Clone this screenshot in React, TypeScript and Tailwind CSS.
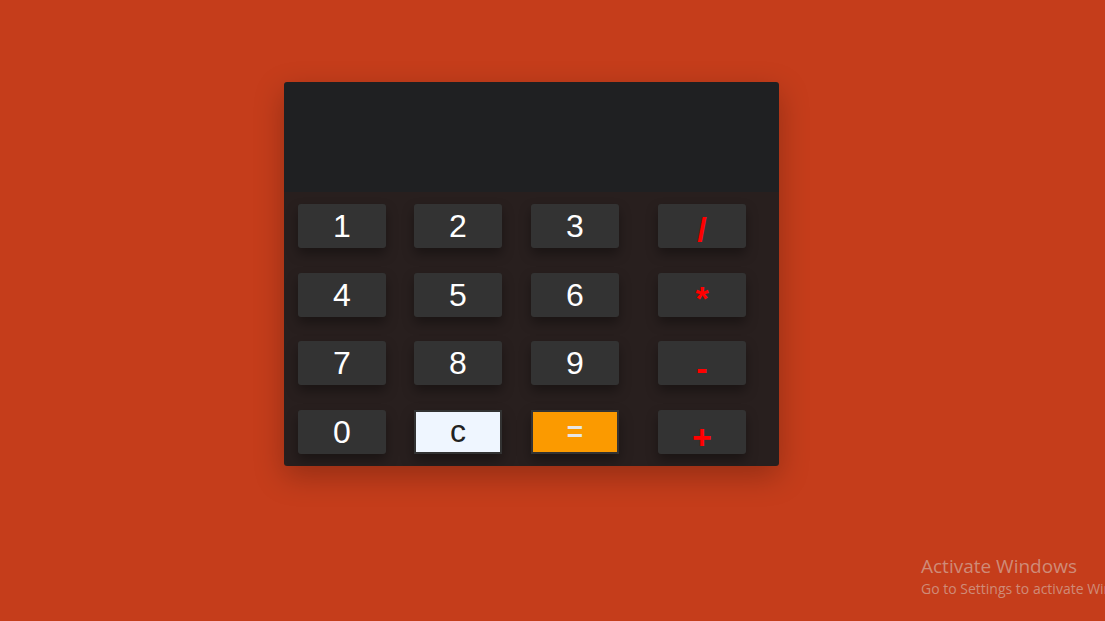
const keys = [
  ['1', '2', '3', '/'],
  ['4', '5', '6', '*'],
  ['7', '8', '9', '-'],
  ['0', 'c', '=', '+'],
];

const Key = ({ label, col }: { label: string; col: number }) => {
  if (label === 'c') {
    return (
      <div className="h-[44px] w-[88px] flex items-center justify-center bg-[#eff6ff] border-2 border-[#333333] text-[#222222] text-[32px] leading-none shadow-[0_6px_12px_rgba(0,0,0,0.35)]">
        <span className="-mt-[2px]">c</span>
      </div>
    );
  }
  if (label === '=') {
    return (
      <div className="h-[44px] w-[88px] flex items-center justify-center bg-[#fb9a00] border-2 border-[#333333] text-[#e6e6e6] text-[28px] font-bold leading-none shadow-[0_6px_12px_rgba(0,0,0,0.35)]">
        =
      </div>
    );
  }
  if (col === 3) {
    return (
      <div className="h-[44px] w-[88px] flex items-center justify-center rounded-[3px] bg-[#333333] text-[#ff0000] text-[34px] font-bold leading-none shadow-[0_6px_12px_rgba(0,0,0,0.35)]">
        <span className={label === '*' ? 'mt-[6px]' : label === '/' ? 'mt-[6px]' : 'mt-[10px]'}>{label}</span>
      </div>
    );
  }
  return (
    <div className="h-[44px] w-[88px] flex items-center justify-center rounded-[3px] bg-[#333333] text-white text-[32px] leading-none shadow-[0_6px_12px_rgba(0,0,0,0.35)]">
      {label}
    </div>
  );
};

export default function App() {
  return (
    <div className="relative h-[621px] w-full bg-[#c53d1b] font-['Liberation_Sans',Arial,sans-serif] pt-[82px] overflow-hidden">
      <div className="ml-[284px] w-[495px] rounded-[3px] overflow-hidden shadow-[0_10px_30px_rgba(0,0,0,0.25)]">
        <div className="h-[110px] bg-[#1f2022]" />
        <div className="bg-[#281f1e] px-[14px] pt-[12px] pb-[12px] grid grid-cols-[116px_117px_127px_88px] gap-y-[24.7px]">
          {keys.map((row) =>
            row.map((k, i) => <Key key={k} label={k} col={i} />)
          )}
        </div>
      </div>

      <div className="absolute left-[921px] top-[554px] font-['Open_Sans','Noto_Sans',sans-serif] text-[#cf8b78] whitespace-nowrap">
        <div className="text-[19px] leading-[25px]">Activate Windows</div>
        <div className="text-[14px] leading-[20px]">Go to Settings to activate Windows.</div>
      </div>
    </div>
  );
}
